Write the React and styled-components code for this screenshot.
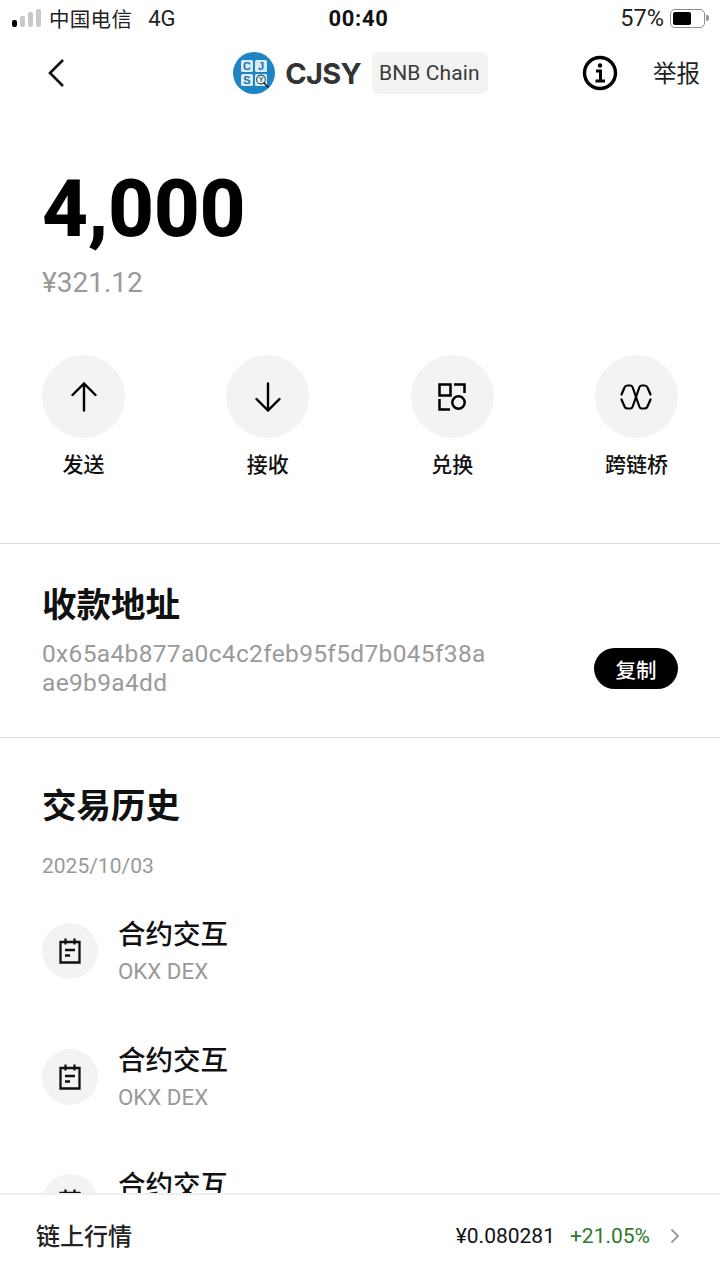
import styled, { createGlobalStyle } from "styled-components";

const Global = createGlobalStyle`
  html, body { margin: 0; padding: 0; background: #fff; }
  * { box-sizing: border-box; }
  body { font-family: Roboto, "Noto Sans CJK SC", sans-serif; color: #000; }
`;

const Page = styled.div`
  width: 720px;
  height: 1280px;
  display: flex;
  flex-direction: column;
  overflow: hidden;
  background: #fff;
`;

const StatusBar = styled.div`
  height: 36px;
  flex: none;
  padding: 0 15px 0 12px;
  display: grid;
  grid-template-columns: 1fr auto 1fr;
  align-items: center;
  font-size: 23.5px;
  color: #222;
`;
const Carrier = styled.div`
  display: flex;
  align-items: center;
`;
const Signal = styled.div`
  display: flex;
  align-items: flex-end;
  gap: 3px;
  margin-right: 8px;
`;
const SignalBar = styled.span`
  width: 5px;
  height: ${(p) => p.$h}px;
  border-radius: 2px;
  background: ${(p) => (p.$on ? "#000" : "#c9c9c9")};
`;
const CarrierName = styled.span`
  font-size: 20.5px;
  letter-spacing: 0.3px;
`;
const Network = styled.span`
  margin-left: 16px;
  font-size: 22px;
`;
const Clock = styled.div`
  font-size: 22px;
  font-weight: 700;
  letter-spacing: 0.7px;
  color: #111;
`;
const BatteryWrap = styled.div`
  display: flex;
  justify-content: flex-end;
  align-items: center;
  gap: 6px;
`;
const Battery = styled.div`
  width: 35px;
  height: 19px;
  border: 1.5px solid #8e8e8e;
  border-radius: 5px;
  padding: 2px;
  position: relative;
  &::after {
    content: "";
    position: absolute;
    right: -5px;
    top: 5px;
    width: 3px;
    height: 6px;
    border-radius: 0 2px 2px 0;
    background: #9a9a9a;
  }
`;
const BatteryFill = styled.div`
  height: 100%;
  background: #000;
  border-radius: 2px;
`;

const Nav = styled.div`
  height: 74px;
  flex: none;
  position: relative;
  display: flex;
  align-items: center;
  justify-content: center;
`;
const Back = styled.div`
  position: absolute;
  left: 45px;
  top: 20px;
  width: 24px;
  height: 34px;
`;
const Heading = styled.div`
  display: flex;
  align-items: center;
  margin-left: 1px;
`;
const TokenName = styled.span`
  margin-left: 10px;
  font-family: Inter, sans-serif;
  font-size: 29px;
  font-weight: 700;
  letter-spacing: -0.7px;
  color: #333;
`;
const ChainTag = styled.span`
  margin-left: 11px;
  height: 42px;
  padding: 0 8px 0 7px;
  display: flex;
  align-items: center;
  background: #f3f3f3;
  border-radius: 7px;
  font-size: 21px;
  letter-spacing: 0.1px;
  color: #3a3a3a;
`;
const NavRight = styled.div`
  position: absolute;
  right: 20px;
  top: 0;
  height: 100%;
  display: flex;
  align-items: center;
  gap: 35px;
`;
const Report = styled.span`
  font-size: 23.5px;
  line-height: 30px;
  margin-top: 1px;
  color: #222;
`;

const Main = styled.div`
  flex: 1;
  min-height: 0;
  overflow: hidden;
`;
const Balance = styled.div`
  padding: 47px 42px 0;
  height: 245px;
`;
const Amount = styled.div`
  font-family: Roboto, sans-serif;
  font-size: 80px;
  line-height: 104px;
  font-weight: 800;
  letter-spacing: -0.4px;
  color: #000;
`;
const Fiat = styled.div`
  font-size: 28px;
  line-height: 40px;
  margin-top: 2px;
  color: #999;
`;
const Actions = styled.div`
  height: 189px;
  padding: 0 42px;
  display: flex;
  justify-content: space-between;
  border-bottom: 1px solid #dedede;
`;
const Action = styled.div`
  width: 83px;
  display: flex;
  flex-direction: column;
  align-items: center;
`;
const ActionCircle = styled.div`
  width: 83px;
  height: 83px;
  border-radius: 50%;
  background: #f3f3f3;
  display: flex;
  align-items: center;
  justify-content: center;
`;
const ActionLabel = styled.div`
  margin-top: 12px;
  font-size: 21px;
  line-height: 30px;
  font-weight: 500;
  white-space: nowrap;
  color: #111;
`;

const Address = styled.div`
  height: 194px;
  padding: 38px 42px 0;
  border-bottom: 1px solid #dedede;
`;
const SectionTitle = styled.div`
  font-size: 34.5px;
  line-height: 46px;
  font-weight: 700;
  color: #111;
`;
const AddressRow = styled.div`
  margin-top: 12px;
  display: flex;
  justify-content: space-between;
  align-items: center;
`;
const AddressText = styled.div`
  width: 450px;
  font-size: 24.5px;
  line-height: 28.5px;
  letter-spacing: 0.33px;
  color: #9a9a9a;
  word-break: break-all;
`;
const CopyButton = styled.div`
  width: 84px;
  height: 41px;
  border-radius: 21px;
  background: #000;
  color: #fff;
  font-size: 20.5px;
  font-weight: 500;
  display: flex;
  align-items: center;
  justify-content: center;
`;

const History = styled.div`
  padding: 45px 42px 0;
`;
const DateLabel = styled.div`
  margin-top: 22px;
  font-size: 21px;
  line-height: 30px;
  color: #999;
`;
const TxList = styled.div`
  margin-top: 26px;
  display: flex;
  flex-direction: column;
  gap: 36.5px;
`;
const TxRow = styled.div`
  height: 89px;
  display: flex;
  align-items: center;
  gap: 20px;
`;
const TxCircle = styled.div`
  width: 56px;
  height: 56px;
  margin-top: -1px;
  border-radius: 50%;
  background: #f3f3f3;
  display: flex;
  align-items: center;
  justify-content: center;
`;
const TxText = styled.div`
  display: flex;
  flex-direction: column;
`;
const TxTitle = styled.div`
  font-size: 27.5px;
  line-height: 38px;
  font-weight: 500;
  color: #111;
`;
const TxSub = styled.div`
  margin-top: 1px;
  font-size: 22.3px;
  line-height: 32px;
  color: #999;
`;

const Footer = styled.div`
  height: 87px;
  flex: none;
  padding: 0 39px 5px 36px;
  border-top: 2px solid #efefef;
  background: #fff;
  display: flex;
  align-items: center;
  justify-content: space-between;
`;
const FooterTitle = styled.div`
  margin-top: -2px;
  font-size: 24px;
  font-weight: 500;
  color: #222;
`;
const Quote = styled.div`
  margin-top: 2px;
  display: flex;
  align-items: center;
`;
const Price = styled.span`
  font-size: 21px;
  color: #111;
`;
const Change = styled.span`
  margin-left: 15px;
  font-size: 21px;
  color: #2f7a2a;
`;
const Chevron = styled.svg`
  margin-left: 19px;
`;

const Logo = () => (
  <svg width="42" height="42" viewBox="0 0 42 42">
    <circle cx="21" cy="21" r="21" fill="#1f84c4" />
    <g fill="#d9ecf6">
      <rect x="8" y="8" width="12" height="12" rx="1.5" />
      <rect x="22" y="8" width="12" height="12" rx="1.5" />
      <rect x="8" y="22" width="12" height="12" rx="1.5" />
      <rect x="22" y="22" width="12" height="12" rx="1.5" />
    </g>
    <g fontFamily="Liberation Sans, sans-serif" fontSize="11" fontWeight="700" fill="#1f6fa8" textAnchor="middle">
      <text x="14" y="18">C</text>
      <text x="28" y="18">J</text>
      <text x="14" y="32">S</text>
    </g>
    <circle cx="28" cy="27.5" r="4.4" fill="#e9f4d8" stroke="#24506e" strokeWidth="1.1" />
    <text x="28" y="30.3" fontFamily="Liberation Sans, sans-serif" fontSize="7" fontWeight="700" fill="#1f6fa8" textAnchor="middle">Y</text>
    <path d="M31 31l4 4" stroke="#111" strokeWidth="1.6" strokeLinecap="round" />
  </svg>
);

const TxIcon = () => (
  <svg width="22" height="26" viewBox="0 0 22 26" fill="none" stroke="#111" strokeWidth="2.3">
    <path d="M1.500 4H20.500V24.500H1.500Z" />
    <path d="M6.500 0.500V6.500M15.500 0.500V6.500" />
    <path d="M6 12H16M6 17.500H11" />
  </svg>
);

const ArrowUp = () => (
  <svg width="26" height="30" viewBox="0 0 26 30" fill="none" stroke="#000" strokeWidth="2.4" strokeLinecap="round">
    <path d="M13 28.500V2M1.500 13L13 1.500L24.500 13" />
  </svg>
);

const ArrowDown = () => (
  <svg width="26" height="30" viewBox="0 0 26 30" fill="none" stroke="#000" strokeWidth="2.4" strokeLinecap="round">
    <path d="M13 1.500V28M1.500 17L13 28.500L24.500 17" />
  </svg>
);

const SwapIcon = () => (
  <svg width="28" height="28" viewBox="0 0 28 28" fill="none" stroke="#000" strokeWidth="2.5">
    <path d="M1.500 1.500H12.500V12.500H1.500Z" />
    <path d="M16 1.500H26.500V10" />
    <path d="M1.500 16V26.500H12" />
    <circle cx="20.500" cy="19.500" r="6.200" />
  </svg>
);

const BridgeIcon = () => (
  <svg width="32" height="26" viewBox="0 0 32 26" fill="none" stroke="#000" strokeWidth="2.2" strokeLinecap="round">
    <path d="M1.500 10.500L4.500 3.500Q5.300 1.500 7.500 1.500H10.500Q12 1.500 12.700 3.500L19.300 22.500Q20 24.500 21.500 24.500H24.500Q26.700 24.500 27.500 22.500L30.500 15.500" />
    <path d="M30.500 10.500L27.500 3.500Q26.700 1.500 24.500 1.500H21.500Q20 1.500 19.300 3.500L12.700 22.500Q12 24.500 10.500 24.500H7.500Q5.300 24.500 4.500 22.500L1.500 15.500" />
  </svg>
);

const actions = [
  { label: "发送", icon: <ArrowUp /> },
  { label: "接收", icon: <ArrowDown /> },
  { label: "兑换", icon: <SwapIcon /> },
  { label: "跨链桥", icon: <BridgeIcon /> },
];

export default function App() {
  return (
    <Page>
      <Global />
      <StatusBar>
        <Carrier>
          <Signal>
            <SignalBar $h={7} $on />
            <SignalBar $h={11} />
            <SignalBar $h={15} />
            <SignalBar $h={18} />
          </Signal>
          <CarrierName>中国电信</CarrierName>
          <Network>4G</Network>
        </Carrier>
        <Clock>00:40</Clock>
        <BatteryWrap>
          57%
          <Battery>
            <BatteryFill style={{ width: "62%" }} />
          </Battery>
        </BatteryWrap>
      </StatusBar>

      <Nav>
        <Back>
          <svg width="24" height="34" viewBox="0 0 24 34" fill="none" stroke="#111" strokeWidth="2.6">
            <path d="M18 4L5 17l13 13" />
          </svg>
        </Back>
        <Heading>
          <Logo />
          <TokenName>CJSY</TokenName>
          <ChainTag>BNB Chain</ChainTag>
        </Heading>
        <NavRight>
          <svg width="36" height="36" viewBox="0 0 36 36" fill="none" stroke="#000" strokeWidth="3.4">
            <circle cx="18" cy="18" r="15.500" />
            <path d="M14 16h4.500v10M13.500 26h9.500" strokeWidth="3" />
            <circle cx="18" cy="10.500" r="2.200" fill="#000" stroke="none" />
          </svg>
          <Report>举报</Report>
        </NavRight>
      </Nav>

      <Main>
        <Balance>
          <Amount>4,000</Amount>
          <Fiat>¥321.12</Fiat>
        </Balance>

        <Actions>
          {actions.map((a) => (
            <Action key={a.label}>
              <ActionCircle>{a.icon}</ActionCircle>
              <ActionLabel>{a.label}</ActionLabel>
            </Action>
          ))}
        </Actions>

        <Address>
          <SectionTitle>收款地址</SectionTitle>
          <AddressRow>
            <AddressText>0x65a4b877a0c4c2feb95f5d7b045f38aae9b9a4dd</AddressText>
            <CopyButton>复制</CopyButton>
          </AddressRow>
        </Address>

        <History>
          <SectionTitle>交易历史</SectionTitle>
          <DateLabel>2025/10/03</DateLabel>
          <TxList>
            {[0, 1, 2].map((i) => (
              <TxRow key={i}>
                <TxCircle>
                  <TxIcon />
                </TxCircle>
                <TxText>
                  <TxTitle>合约交互</TxTitle>
                  <TxSub>OKX DEX</TxSub>
                </TxText>
              </TxRow>
            ))}
          </TxList>
        </History>
      </Main>

      <Footer>
        <FooterTitle>链上行情</FooterTitle>
        <Quote>
          <Price>¥0.080281</Price>
          <Change>+21.05%</Change>
          <Chevron width="12" height="18" viewBox="0 0 12 18" fill="none" stroke="#999" strokeWidth="1.800">
            <path d="M2.500 2.500L9 9l-6.500 6.500" />
          </Chevron>
        </Quote>
      </Footer>
    </Page>
  );
}
